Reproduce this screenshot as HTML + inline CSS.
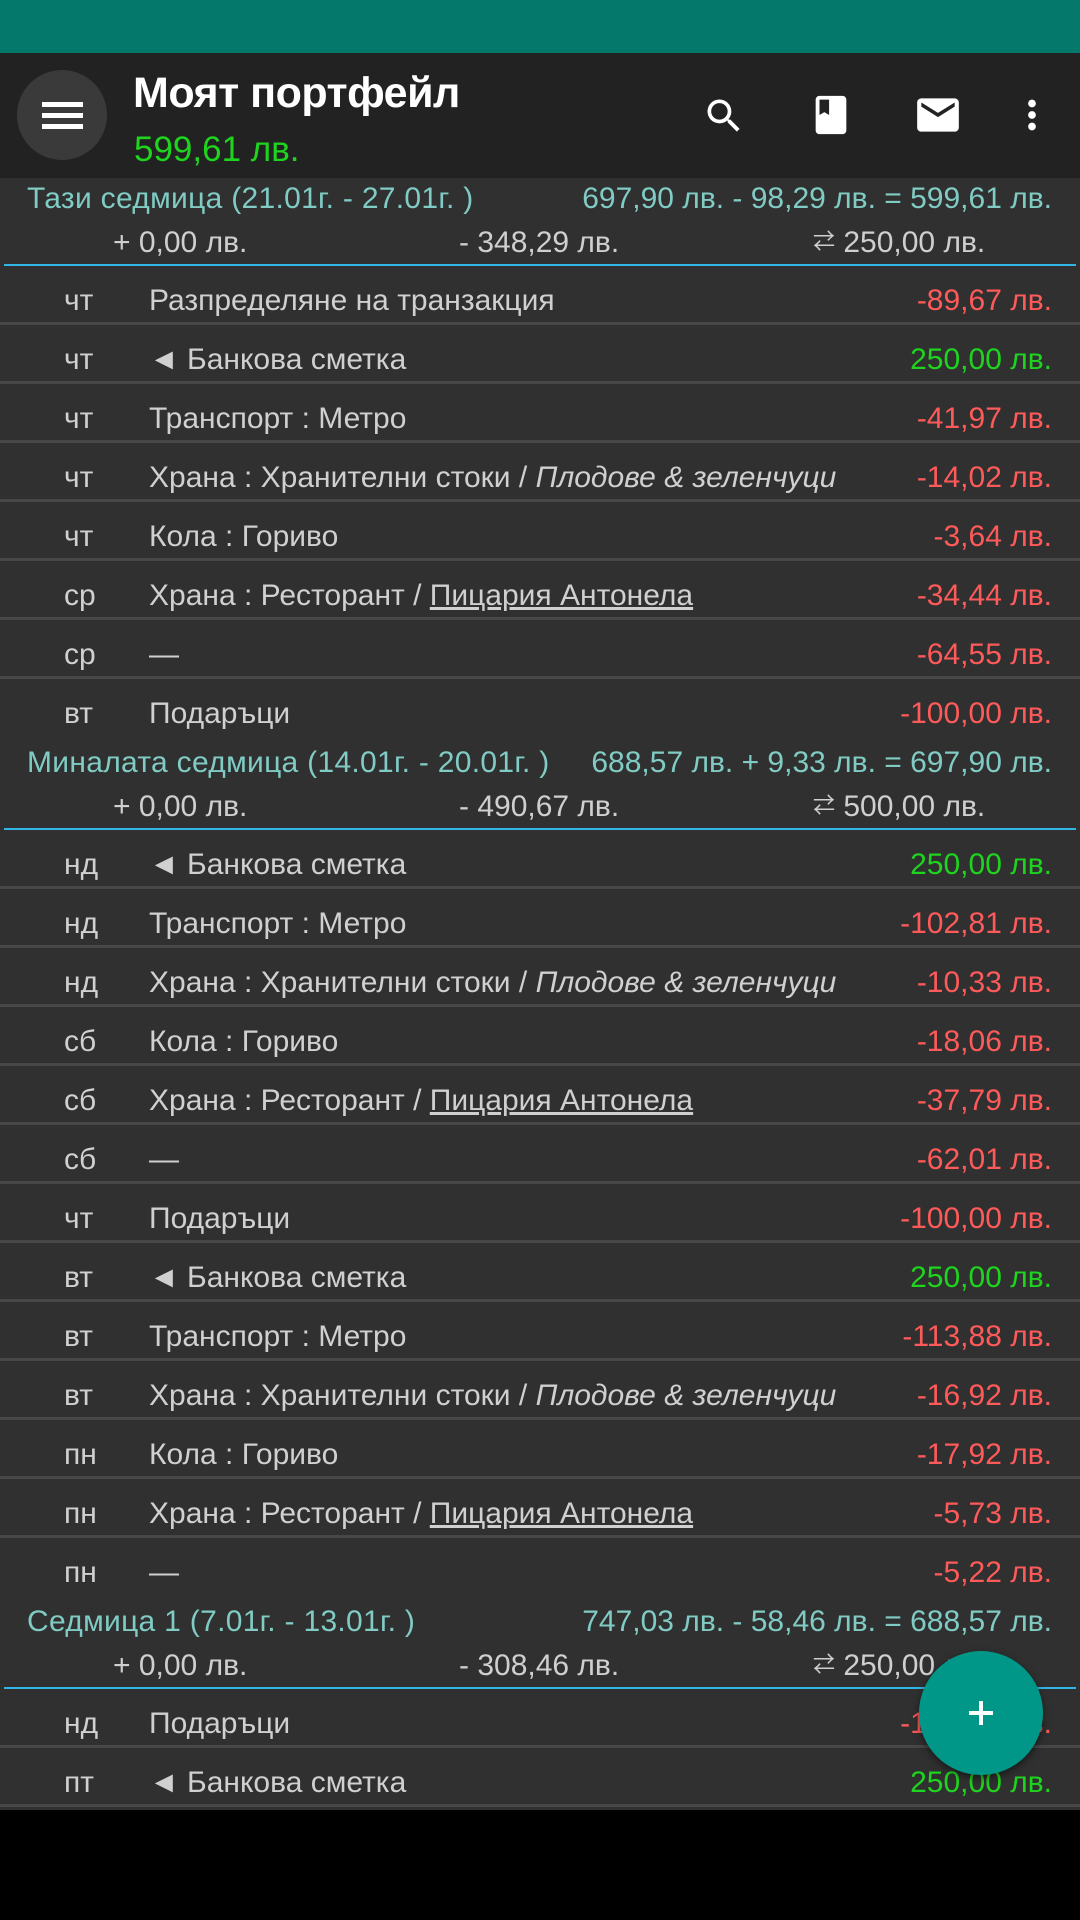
<!DOCTYPE html>
<html><head><meta charset="utf-8"><style>
*{margin:0;padding:0;box-sizing:border-box}
body{width:1080px;height:1920px;background:#000;font-family:"Liberation Sans","Noto Sans CJK JP",sans-serif;position:relative;overflow:hidden}
.status{position:absolute;left:0;top:0;width:1080px;height:53px;background:#03786b}
.bar{position:absolute;left:0;top:53px;width:1080px;height:125px;background:#222}
.menu{position:absolute;left:17px;top:70px;width:90px;height:90px;border-radius:50%;background:#3a3a3a}
.menu i{position:absolute;left:25px;width:41px;height:5px;background:#fff}
.title{position:absolute;left:133px;top:69px;color:#fff;font-size:43px;font-weight:bold;letter-spacing:-0.5px}
.bal{position:absolute;left:134px;top:130px;color:#1ed41e;font-size:35px}
.list{position:absolute;left:0;top:178px;width:1080px;height:1632px;background:#303030}
.hdr{position:absolute;left:0;width:1080px;height:88px}
.hdr .l1{position:absolute;left:27px;top:4px;color:#80cbc4;font-size:30px;white-space:nowrap;letter-spacing:0.3px}
.hdr .r1{position:absolute;right:28px;top:4px;color:#80cbc4;font-size:30px;white-space:nowrap}
.hdr .s{position:absolute;top:48px;color:#cfcfcf;font-size:30px;white-space:nowrap}
.hdr .s b{font-weight:normal;font-size:22px;position:relative;top:-3px}
.hdr .line{position:absolute;left:4px;right:4px;bottom:0;height:2px;background:#33b5e5}
.row{position:absolute;left:0;width:1080px;height:59px;border-bottom:3px solid #474747}
.row span{position:absolute;top:18px;font-size:30px;white-space:nowrap;color:#d0d0d0}
.d{left:64px}
.t{left:149px}
.a{right:28px}
.neg{color:#ff5a5a!important}
.pos{color:#1ed41e!important}
.row u{text-decoration:underline}
.fab{position:absolute;left:919px;top:1651px;width:124px;height:124px;border-radius:50%;background:#009688;box-shadow:0 3px 8px rgba(0,0,0,.5)}
.fab:before{content:"";position:absolute;left:50px;top:60px;width:24px;height:4px;background:#fff}
.fab:after{content:"";position:absolute;left:60px;top:50px;width:4px;height:24px;background:#fff}
</style></head><body>
<div class="status"></div>
<div class="bar">
<div class="menu" style="top:17px"><i style="top:32px"></i><i style="top:43px"></i><i style="top:54px"></i></div>
</div>
<div class="title">Моят портфейл</div>
<div class="bal">599,61 лв.</div>
<svg style="position:absolute;left:702px;top:94px" width="44" height="44" viewBox="0 0 24 24"><path fill="#fff" d="M15.5 14h-.79l-.28-.27A6.470 6.470 0 0 0 16 9.5 6.5 6.5 0 1 0 9.5 16c1.61 0 3.09-.59 4.23-1.57l.27.28v.79l5 4.99L20.49 19l-4.99-5zm-6 0C7.01 14 5 11.990 5 9.5S7.01 5 9.5 5 14 7.01 14 9.5 11.99 14 9.5 14z"/></svg>
<svg style="position:absolute;left:808px;top:92px" width="46" height="46" viewBox="0 0 24 24"><path fill="#fff" d="M18 2H6c-1.1 0-2 .9-2 2v16c0 1.1.9 2 2 2h12c1.1 0 2-.9 2-2V4c0-1.1-.9-2-2-2zM6 4h5v8l-2.5-1.5L6 12V4z"/></svg>
<svg style="position:absolute;left:913px;top:90px" width="50" height="50" viewBox="0 0 24 24"><path fill="#fff" d="M20 4H4c-1.1 0-2 .9-2 2v12c0 1.1.9 2 2 2h16c1.1 0 2-.9 2-2V6c0-1.1-.9-2-2-2zm0 4l-8 5-8-5V6l8 5 8-5v2z"/></svg>
<svg style="position:absolute;left:1009px;top:92px" width="46" height="46" viewBox="0 0 24 24"><path fill="#fff" d="M12 8c1.1 0 2-.9 2-2s-.9-2-2-2-2 .9-2 2 .9 2 2 2zm0 2c-1.1 0-2 .9-2 2s.9 2 2 2 2-.9 2-2-.9-2-2-2zm0 6c-1.1 0-2 .9-2 2s.9 2 2 2 2-.9 2-2-.9-2-2-2z"/></svg>

<div class="list">
<div class="hdr" style="top:0"><span class="l1">Тази седмица (21.01г. - 27.01г. )</span><span class="r1">697,90 лв. - 98,29 лв. = 599,61 лв.</span><span class="s" style="left:113px">+ 0,00 лв.</span><span class="s" style="left:459px">- 348,29 лв.</span><span class="s" style="left:813px"><b>⇄</b> 250,00 лв.</span><div class="line"></div></div>
<div class="row" style="top:88px"><span class="d">чт</span><span class="t">Разпределяне на транзакция</span><span class="a neg">-89,67 лв.</span></div>
<div class="row" style="top:147px"><span class="d">чт</span><span class="t">◄ Банкова сметка</span><span class="a pos">250,00 лв.</span></div>
<div class="row" style="top:206px"><span class="d">чт</span><span class="t">Транспорт : Метро</span><span class="a neg">-41,97 лв.</span></div>
<div class="row" style="top:265px"><span class="d">чт</span><span class="t">Храна : Хранителни стоки / <i>Плодове &amp; зеленчуци</i></span><span class="a neg">-14,02 лв.</span></div>
<div class="row" style="top:324px"><span class="d">чт</span><span class="t">Кола : Гориво</span><span class="a neg">-3,64 лв.</span></div>
<div class="row" style="top:383px"><span class="d">ср</span><span class="t">Храна : Ресторант / <u>Пицария Антонела</u></span><span class="a neg">-34,44 лв.</span></div>
<div class="row" style="top:442px"><span class="d">ср</span><span class="t">—</span><span class="a neg">-64,55 лв.</span></div>
<div class="row" style="top:501px;border:none"><span class="d">вт</span><span class="t">Подаръци</span><span class="a neg">-100,00 лв.</span></div>

<div class="hdr" style="top:564px"><span class="l1">Миналата седмица (14.01г. - 20.01г. )</span><span class="r1">688,57 лв. + 9,33 лв. = 697,90 лв.</span><span class="s" style="left:113px">+ 0,00 лв.</span><span class="s" style="left:459px">- 490,67 лв.</span><span class="s" style="left:813px"><b>⇄</b> 500,00 лв.</span><div class="line"></div></div>
<div class="row" style="top:652px"><span class="d">нд</span><span class="t">◄ Банкова сметка</span><span class="a pos">250,00 лв.</span></div>
<div class="row" style="top:711px"><span class="d">нд</span><span class="t">Транспорт : Метро</span><span class="a neg">-102,81 лв.</span></div>
<div class="row" style="top:770px"><span class="d">нд</span><span class="t">Храна : Хранителни стоки / <i>Плодове &amp; зеленчуци</i></span><span class="a neg">-10,33 лв.</span></div>
<div class="row" style="top:829px"><span class="d">сб</span><span class="t">Кола : Гориво</span><span class="a neg">-18,06 лв.</span></div>
<div class="row" style="top:888px"><span class="d">сб</span><span class="t">Храна : Ресторант / <u>Пицария Антонела</u></span><span class="a neg">-37,79 лв.</span></div>
<div class="row" style="top:947px"><span class="d">сб</span><span class="t">—</span><span class="a neg">-62,01 лв.</span></div>
<div class="row" style="top:1006px"><span class="d">чт</span><span class="t">Подаръци</span><span class="a neg">-100,00 лв.</span></div>
<div class="row" style="top:1065px"><span class="d">вт</span><span class="t">◄ Банкова сметка</span><span class="a pos">250,00 лв.</span></div>
<div class="row" style="top:1124px"><span class="d">вт</span><span class="t">Транспорт : Метро</span><span class="a neg">-113,88 лв.</span></div>
<div class="row" style="top:1183px"><span class="d">вт</span><span class="t">Храна : Хранителни стоки / <i>Плодове &amp; зеленчуци</i></span><span class="a neg">-16,92 лв.</span></div>
<div class="row" style="top:1242px"><span class="d">пн</span><span class="t">Кола : Гориво</span><span class="a neg">-17,92 лв.</span></div>
<div class="row" style="top:1301px"><span class="d">пн</span><span class="t">Храна : Ресторант / <u>Пицария Антонела</u></span><span class="a neg">-5,73 лв.</span></div>
<div class="row" style="top:1360px;border:none"><span class="d">пн</span><span class="t">—</span><span class="a neg">-5,22 лв.</span></div>

<div class="hdr" style="top:1423px"><span class="l1">Седмица 1 (7.01г. - 13.01г. )</span><span class="r1">747,03 лв. - 58,46 лв. = 688,57 лв.</span><span class="s" style="left:113px">+ 0,00 лв.</span><span class="s" style="left:459px">- 308,46 лв.</span><span class="s" style="left:813px"><b>⇄</b> 250,00 лв.</span><div class="line"></div></div>
<div class="row" style="top:1511px"><span class="d">нд</span><span class="t">Подаръци</span><span class="a neg">-100,00 лв.</span></div>
<div class="row" style="top:1570px"><span class="d">пт</span><span class="t">◄ Банкова сметка</span><span class="a pos">250,00 лв.</span></div>
</div>
<div class="fab"></div>
</body></html>
